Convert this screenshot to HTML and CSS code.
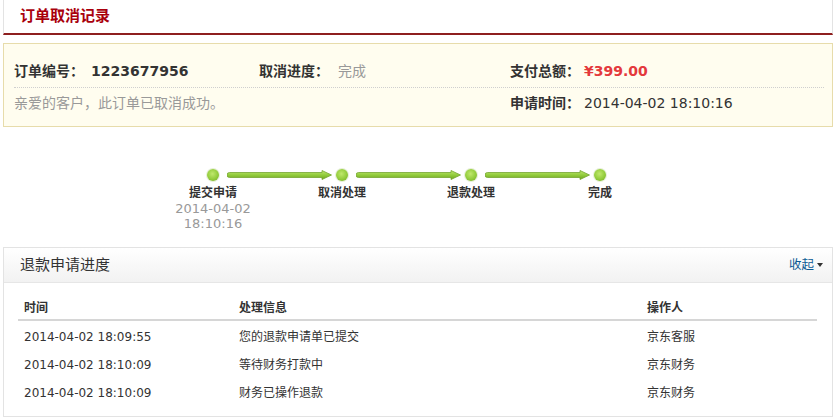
FILE: index.html
```html
<!DOCTYPE html>
<html lang="zh-CN">
<head>
<meta charset="utf-8">
<title>订单取消记录</title>
<link rel="stylesheet" href="styles.css">
</head>
<body>
<div class="page">
  <div class="mt">
    <h3 class="mt-title">订单取消记录</h3>
  </div>

  <div class="summary">
    <div class="sum-row sum-row-top">
      <div class="sum-col"><span class="lbl">订单编号：</span><span class="order-no">1223677956</span></div>
      <div class="sum-col"><span class="lbl">取消进度：</span><span class="muted status">完成</span></div>
      <div class="sum-col"><span class="lbl">支付总额：</span><span class="price">¥399.00</span></div>
    </div>
    <div class="sum-row sum-row-bottom">
      <div class="sum-col sum-col-wide"><span class="muted">亲爱的客户，此订单已取消成功。</span></div>
      <div class="sum-col"><span class="lbl">申请时间：</span><span class="val">2014-04-02 18:10:16</span></div>
    </div>
  </div>

  <div class="progress">
    <div class="step">
      <span class="dot"></span>
      <span class="step-name">提交申请</span>
      <span class="step-time">2014-04-02</span>
      <span class="step-time">18:10:16</span>
    </div>
    <svg class="arrow" width="105" height="10" viewBox="0 0 105 10">
      <defs>
        <linearGradient id="ag" x1="0" y1="0" x2="0" y2="1">
          <stop offset="0" stop-color="#bde66f"/>
          <stop offset="0.5" stop-color="#93cc3c"/>
          <stop offset="1" stop-color="#6fa520"/>
        </linearGradient>
      </defs>
      <path d="M2.5 2.5 H95 V0.5 L104.5 5 L95 9.5 V7.5 H2.5 A2.5 2.5 0 0 1 2.5 2.5 Z" fill="url(#ag)" stroke="#75a531" stroke-width="0.8"/>
    </svg>
    <div class="step">
      <span class="dot"></span>
      <span class="step-name">取消处理</span>
    </div>
    <svg class="arrow" width="105" height="10" viewBox="0 0 105 10">
      <path d="M2.5 2.5 H95 V0.5 L104.5 5 L95 9.5 V7.5 H2.5 A2.5 2.5 0 0 1 2.5 2.5 Z" fill="url(#ag)" stroke="#75a531" stroke-width="0.8"/>
    </svg>
    <div class="step">
      <span class="dot"></span>
      <span class="step-name">退款处理</span>
    </div>
    <svg class="arrow" width="105" height="10" viewBox="0 0 105 10">
      <path d="M2.5 2.5 H95 V0.5 L104.5 5 L95 9.5 V7.5 H2.5 A2.5 2.5 0 0 1 2.5 2.5 Z" fill="url(#ag)" stroke="#75a531" stroke-width="0.8"/>
    </svg>
    <div class="step">
      <span class="dot"></span>
      <span class="step-name">完成</span>
    </div>
  </div>

  <div class="refund">
    <div class="refund-hd">
      <h4 class="refund-title">退款申请进度</h4>
      <a class="toggle" href="#">收起<span class="caret"></span></a>
    </div>
    <table class="log">
      <colgroup>
        <col class="c-time">
        <col class="c-info">
        <col class="c-op">
      </colgroup>
      <thead>
        <tr><th>时间</th><th>处理信息</th><th>操作人</th></tr>
      </thead>
      <tbody>
        <tr><td class="num">2014-04-02 18:09:55</td><td>您的退款申请单已提交</td><td>京东客服</td></tr>
        <tr><td class="num">2014-04-02 18:10:09</td><td>等待财务打款中</td><td>京东财务</td></tr>
        <tr><td class="num">2014-04-02 18:10:09</td><td>财务已操作退款</td><td>京东财务</td></tr>
      </tbody>
    </table>
  </div>
</div>
</body>
</html>
```

FILE: styles.css
```css
* { box-sizing: border-box; }

html, body {
  margin: 0;
  padding: 0;
  background: #fff;
}

body {
  font-family: "DejaVu Sans", "Noto Sans CJK SC", sans-serif;
  color: #333;
  font-size: 12px;
}

.page {
  width: 830px;
  margin-left: 3px;
}

/* header */
.mt {
  height: 35px;
  border-left: 1px solid #e3e3e3;
  border-right: 1px solid #e3e3e3;
  border-bottom: 2px solid #8e1f1f;
  padding-left: 16px;
}

.mt-title {
  margin: 0;
  font-size: 15px;
  line-height: 33px;
  font-weight: bold;
  color: #a9000c;
}

/* summary */
.summary {
  margin-top: 8px;
  background: #fffdef;
  border: 1px solid #e7dcab;
  padding: 0 8px 0 10px;
}

.sum-row {
  display: grid;
  grid-template-columns: 245px 251px 1fr;
  line-height: 20px;
  font-size: 14px;
}

.sum-row-top {
  padding: 17px 0 6px;
  border-bottom: 1px dotted #cfcfcf;
}

.sum-row-bottom {
  grid-template-columns: 496px 1fr;
  padding: 5px 0 13px;
}

.lbl {
  font-weight: bold;
  color: #333;
}

.order-no {
  margin-left: 7px;
  font-weight: bold;
  color: #333;
}

.muted {
  color: #999;
}

.status {
  margin-left: 9px;
}

.price {
  margin-left: 4px;
  font-weight: bold;
  color: #e4393c;
}

.val {
  margin-left: 4px;
  color: #333;
}

/* progress */
.progress {
  display: flex;
  align-items: flex-start;
  margin-top: 42px;
  padding-left: 200px;
  height: 61px;
}

.step {
  width: 20px;
  display: flex;
  flex-direction: column;
  align-items: center;
}

.dot {
  width: 12px;
  height: 12px;
  border-radius: 50%;
  background: radial-gradient(circle at 45% 40%, #c0e86c 0%, #93cc3c 55%, #6fa320 100%);
  box-shadow: 0 0 0 1px #e6efd8;
}

.step-name {
  margin-top: 4px;
  font-size: 12px;
  line-height: 16px;
  font-weight: bold;
  color: #333;
  white-space: nowrap;
}

.step-time {
  font-size: 13px;
  line-height: 15px;
  color: #999;
  white-space: nowrap;
}

.arrow {
  display: block;
  margin: 1px 0 0 4px;
  flex: none;
}

/* refund */
.refund {
  margin-top: 17px;
  border: 1px solid #e3e3e3;
  padding-bottom: 9px;
}

.refund-hd {
  height: 35px;
  display: flex;
  align-items: center;
  justify-content: space-between;
  padding: 0 9px 0 16px;
  background: linear-gradient(#ffffff, #f2f2f2);
  border-bottom: 1px solid #e6e6e6;
}

.refund-title {
  margin: 0;
  font-size: 15px;
  font-weight: normal;
  color: #333;
  line-height: 20px;
}

.toggle {
  display: flex;
  align-items: center;
  font-size: 12.5px;
  color: #0b5a94;
  text-decoration: none;
  line-height: 20px;
}

.caret {
  margin-left: 3px;
  width: 0;
  height: 0;
  border-left: 3.5px solid transparent;
  border-right: 3.5px solid transparent;
  border-top: 4px solid #333;
}

.log {
  width: 799px;
  margin: 0 14px;
  border-collapse: collapse;
  table-layout: fixed;
}

.c-time { width: 215px; }
.c-info { width: 408px; }

.log th {
  text-align: left;
  font-size: 12px;
  font-weight: bold;
  line-height: 16px;
  padding: 17px 6px 3px;
  border-bottom: 2px solid #d6d6d6;
  color: #333;
}

.log td {
  font-size: 12px;
  line-height: 16px;
  padding: 6px 6px;
  color: #333;
  white-space: nowrap;
}

.log tbody tr:first-child td {
  padding-top: 8px;
}
```
